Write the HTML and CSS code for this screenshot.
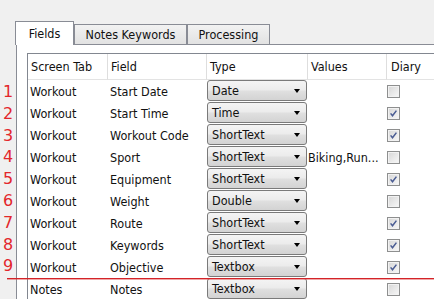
FILE: index.html
```html
<!DOCTYPE html>
<html>
<head>
<meta charset="utf-8">
<link rel="stylesheet" href="styles.css">
</head>
<body>
<div class="screen">
  <div class="marks">
    <span>1</span><span>2</span><span>3</span><span>4</span><span>5</span><span>6</span><span>7</span><span>8</span><span>9</span>
  </div>
  <div class="tabctl">
    <div class="tabs">
      <div class="tab active">Fields</div>
      <div class="tab notes">Notes Keywords</div>
      <div class="tab proc">Processing</div>
    </div>
    <div class="pane">
      <div class="grid">
        <div class="th">Screen Tab</div>
        <div class="th">Field</div>
        <div class="th">Type</div>
        <div class="th">Values</div>
        <div class="th last">Diary</div>

        <div class="td">Workout</div><div class="td">Start Date</div>
        <div class="td type"><div class="sel"><span>Date</span><i class="arrow"></i></div></div>
        <div class="td val"></div><div class="td diary"><span class="cb"></span></div>

        <div class="td">Workout</div><div class="td">Start Time</div>
        <div class="td type"><div class="sel"><span>Time</span><i class="arrow"></i></div></div>
        <div class="td val"></div><div class="td diary"><span class="cb on"><svg viewBox="0 0 11 11" width="11" height="11"><path d="M2.6 5.4 L4.5 7.8 L8.4 2.6" fill="none" stroke="#4a5c93" stroke-width="1.5"/></svg></span></div>

        <div class="td">Workout</div><div class="td">Workout Code</div>
        <div class="td type"><div class="sel"><span>ShortText</span><i class="arrow"></i></div></div>
        <div class="td val"></div><div class="td diary"><span class="cb on"><svg viewBox="0 0 11 11" width="11" height="11"><path d="M2.6 5.4 L4.5 7.8 L8.4 2.6" fill="none" stroke="#4a5c93" stroke-width="1.5"/></svg></span></div>

        <div class="td">Workout</div><div class="td">Sport</div>
        <div class="td type"><div class="sel"><span>ShortText</span><i class="arrow"></i></div></div>
        <div class="td val">Biking,Run...</div><div class="td diary"><span class="cb"></span></div>

        <div class="td">Workout</div><div class="td">Equipment</div>
        <div class="td type"><div class="sel"><span>ShortText</span><i class="arrow"></i></div></div>
        <div class="td val"></div><div class="td diary"><span class="cb on"><svg viewBox="0 0 11 11" width="11" height="11"><path d="M2.6 5.4 L4.5 7.8 L8.4 2.6" fill="none" stroke="#4a5c93" stroke-width="1.5"/></svg></span></div>

        <div class="td">Workout</div><div class="td">Weight</div>
        <div class="td type"><div class="sel"><span>Double</span><i class="arrow"></i></div></div>
        <div class="td val"></div><div class="td diary"><span class="cb"></span></div>

        <div class="td">Workout</div><div class="td">Route</div>
        <div class="td type"><div class="sel"><span>ShortText</span><i class="arrow"></i></div></div>
        <div class="td val"></div><div class="td diary"><span class="cb on"><svg viewBox="0 0 11 11" width="11" height="11"><path d="M2.6 5.4 L4.5 7.8 L8.4 2.6" fill="none" stroke="#4a5c93" stroke-width="1.5"/></svg></span></div>

        <div class="td">Workout</div><div class="td">Keywords</div>
        <div class="td type"><div class="sel"><span>ShortText</span><i class="arrow"></i></div></div>
        <div class="td val"></div><div class="td diary"><span class="cb on"><svg viewBox="0 0 11 11" width="11" height="11"><path d="M2.6 5.4 L4.5 7.8 L8.4 2.6" fill="none" stroke="#4a5c93" stroke-width="1.5"/></svg></span></div>

        <div class="td">Workout</div><div class="td">Objective</div>
        <div class="td type"><div class="sel"><span>Textbox</span><i class="arrow"></i></div></div>
        <div class="td val"></div><div class="td diary"><span class="cb on"><svg viewBox="0 0 11 11" width="11" height="11"><path d="M2.6 5.4 L4.5 7.8 L8.4 2.6" fill="none" stroke="#4a5c93" stroke-width="1.5"/></svg></span></div>

        <div class="td">Notes</div><div class="td">Notes</div>
        <div class="td type"><div class="sel"><span>Textbox</span><i class="arrow"></i></div></div>
        <div class="td val"></div><div class="td diary"><span class="cb"></span></div>
      </div>
    </div>
  </div>
  <div class="redline"></div>
</div>
</body>
</html>
```

FILE: styles.css
```css
html, body {
  margin: 0;
  padding: 0;
}
body {
  background: #f0f0f0;
  font-family: "DejaVu Sans Condensed", "DejaVu Sans", sans-serif;
  font-size: 12.5px;
  color: #111;
}
.screen {
  display: flex;
  width: 434px;
  height: 299px;
  overflow: hidden;
  position: relative;
}
.marks {
  flex: none;
  width: 16px;
  padding-top: 81px;
  display: flex;
  flex-direction: column;
  font-family: "DejaVu Sans", sans-serif;
  font-size: 16px;
  color: #e3262b;
}
.marks span {
  height: 21.8px;
  line-height: 21.8px;
  text-align: center;
}
.tabctl {
  flex: 1;
  min-width: 0;
  display: flex;
  flex-direction: column;
  padding-top: 21px;
}
.tabs {
  display: flex;
  align-items: flex-end;
  height: 23px;
  flex: none;
  z-index: 1;
}
.tab {
  box-sizing: border-box;
  height: 20px;
  border: 1px solid #898c95;
  border-bottom: none;
  background: linear-gradient(#f2f2f2, #e2e2e2);
  display: flex;
  align-items: center;
  justify-content: center;
  white-space: nowrap;
}
.tab.active {
  width: 59px;
  height: 24px;
  margin-left: -1px;
  margin-bottom: -1px;
  background: #fff;
  align-items: flex-start;
  padding-top: 4px;
}
.tab.notes {
  width: 113px;
}
.tab.proc {
  width: 83px;
}
.pane {
  flex: 1;
  background: #fff;
  border-top: 1px solid #898c95;
  border-left: 1px solid #898c95;
  padding: 8px 0 0 10px;
}
.grid {
  display: grid;
  grid-template-columns: 80px 99px 101px 79px 80px;
  grid-template-rows: 26px;
  grid-auto-rows: 22px;
  width: max-content;
  border-left: 1px solid #828790;
  border-top: 1px solid #828790;
}
.th {
  box-sizing: border-box;
  border-bottom: 1px solid #e3e3e3;
  border-right: 1px solid #dedede;
  padding-left: 3px;
  display: flex;
  align-items: center;
  white-space: nowrap;
}
.th.last {
  border-right: none;
  padding-left: 4px;
}
.td {
  display: flex;
  align-items: center;
  padding-left: 2px;
  white-space: nowrap;
  overflow: hidden;
}
.td.type {
  padding-left: 0;
  align-items: flex-start;
}
.td.val {
  padding-left: 0;
}
.td.diary {
  padding-left: 0;
}
.sel {
  box-sizing: border-box;
  width: 100px;
  height: 21px;
  border: 1px solid #7a7a7a;
  border-radius: 3px;
  background: linear-gradient(#f4f4f4 0%, #ececec 45%, #dfdfdf 55%, #d3d3d3 100%);
  display: flex;
  align-items: center;
  justify-content: space-between;
  padding: 0 6px 0 4px;
}
.arrow {
  width: 0;
  height: 0;
  border-left: 3.5px solid transparent;
  border-right: 3.5px solid transparent;
  border-top: 4px solid #000;
}
.cb {
  box-sizing: border-box;
  width: 13px;
  height: 13px;
  border: 1px solid #8e8f8f;
  background: linear-gradient(135deg, #d6d6d6, #f8f8f8);
  box-shadow: inset 0 0 0 1px #f2f2f2;
  display: flex;
}
.cb svg {
  display: block;
}
.redline {
  position: absolute;
  left: 7px;
  right: 0;
  top: 278px;
  height: 1px;
  background: #d42328;
  box-shadow: 0 1px 0 rgba(220, 60, 60, 0.45);
}
```
